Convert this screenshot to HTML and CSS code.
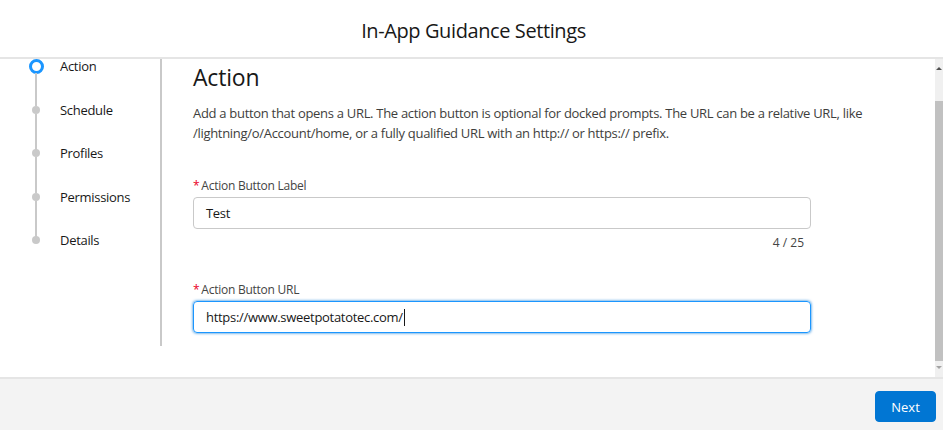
FILE: index.html
```html
<!DOCTYPE html>
<html lang="en">
<head>
<meta charset="utf-8">
<title>In-App Guidance Settings</title>
<link rel="stylesheet" href="styles.css">
</head>
<body>
<div class="modal">
  <header class="modal-header">
    <h1 class="modal-title">In-App Guidance Settings</h1>
  </header>
  <div class="modal-body">
    <nav class="path">
      <ul class="path-list">
        <li class="path-item is-current"><span class="path-marker"></span><span class="path-label">Action</span></li>
        <li class="path-item"><span class="path-marker"></span><span class="path-label">Schedule</span></li>
        <li class="path-item"><span class="path-marker"></span><span class="path-label">Profiles</span></li>
        <li class="path-item"><span class="path-marker"></span><span class="path-label">Permissions</span></li>
        <li class="path-item is-last"><span class="path-marker"></span><span class="path-label">Details</span></li>
      </ul>
    </nav>
    <main class="content">
      <h2 class="content-title">Action</h2>
      <p class="content-desc">Add a button that opens a URL. The action button is optional for docked prompts. The URL can be a relative URL, like /lightning/o/Account/home, or a fully qualified URL with an http:// or https:// prefix.</p>
      <div class="field">
        <label class="field-label"><abbr class="required">*</abbr>Action Button Label</label>
        <div class="input">Test</div>
        <div class="field-counter">4 / 25</div>
      </div>
      <div class="field field-second">
        <label class="field-label"><abbr class="required">*</abbr>Action Button URL</label>
        <div class="input is-focused">https://www.sweetpotatotec.com/<span class="caret"></span></div>
      </div>
    </main>
    <div class="scrollbar">
      <span class="scroll-arrow scroll-up"></span>
      <div class="scroll-track"><div class="scroll-thumb"></div></div>
      <span class="scroll-arrow scroll-down"></span>
    </div>
  </div>
  <footer class="modal-footer">
    <button class="btn-next" type="button">Next</button>
  </footer>
</div>
</body>
</html>
```
FILE: styles.css
```css
* { box-sizing: border-box; }
html, body {
  margin: 0;
  padding: 0;
  background: #fff;
}
body {
  font-family: "Open Sans", "Noto Sans", "Liberation Sans", sans-serif;
  color: #181818;
  width: 943px;
  height: 430px;
  overflow: hidden;
}
.modal {
  display: flex;
  flex-direction: column;
  height: 430px;
}
.modal-header {
  height: 59px;
  border-bottom: 2px solid #e5e5e5;
  display: flex;
  align-items: center;
  justify-content: center;
  padding-top: 3px;
  padding-left: 4px;
}
.modal-title {
  margin: 0;
  font-size: 20px;
  font-weight: 400;
  color: #181818;
  letter-spacing: -0.4px;
}
.modal-body {
  height: 320px;
  display: flex;
  border-bottom: 2px solid #e5e5e5;
}
.path {
  width: 162px;
  height: 287px;
  border-right: 2px solid #c9c9c9;
  flex: none;
}
.path-list {
  list-style: none;
  margin: 0;
  padding: 0;
  display: flex;
  flex-direction: column;
  gap: 29.5px;
}
.path-item {
  position: relative;
  height: 14px;
  display: flex;
  align-items: center;
  font-size: 13px;
  letter-spacing: -0.3px;
}
.path-marker {
  width: 8px;
  height: 8px;
  border-radius: 50%;
  background: #c9c9c9;
  margin-left: 32px;
  flex: none;
}
.path-item.is-current .path-marker {
  width: 15px;
  height: 15px;
  margin-left: 28.5px;
  margin-right: -3.5px;
  background: #fff;
  border: 3.5px solid #1b96ff;
}
.path-item::after {
  content: "";
  position: absolute;
  left: 35px;
  top: 11px;
  width: 2px;
  height: 36px;
  background: #c9c9c9;
}
.path-item.is-current::after { top: 14px; height: 33px; }
.path-item.is-last::after { display: none; }
.path-label {
  margin-left: 20px;
  color: #181818;
}
.content {
  flex: 1;
  padding: 3px 32px 0 31px;
}
.content-title {
  margin: 0;
  font-size: 23px;
  font-weight: 400;
  line-height: 30px;
  color: #181818;
  letter-spacing: -0.2px;
}
.content-desc {
  margin: 11px 0 0;
  font-size: 13px;
  line-height: 20px;
  color: #3e3e3c;
  letter-spacing: -0.3px;
}
.field {
  width: 618px;
  margin-top: 35px;
}
.field-second { margin-top: 31px; }
.field-label {
  display: block;
  font-size: 12px;
  line-height: 16px;
  color: #444;
  margin-bottom: 3px;
  letter-spacing: -0.25px;
}
.required {
  color: #ea001e;
  text-decoration: none;
  margin-right: 2px;
}
.input {
  height: 32px;
  border: 1px solid #c9c9c9;
  border-radius: 4px;
  padding: 0 12px;
  display: flex;
  align-items: center;
  font-size: 13px;
  color: #181818;
  letter-spacing: -0.3px;
}
.input.is-focused {
  border-color: #1b96ff;
  box-shadow: 0 0 3px #0176d3;
}
.caret {
  display: inline-block;
  width: 1px;
  height: 17px;
  background: #181818;
  margin-left: 1px;
}
.field-counter {
  text-align: right;
  font-size: 12px;
  line-height: 16px;
  color: #444;
  padding-right: 7px;
  margin-top: 6px;
}
.scrollbar {
  width: 8px;
  flex: none;
  background: #f0f0f0;
  display: flex;
  flex-direction: column;
  align-items: center;
  padding: 8px 0 8px;
}
.scroll-arrow {
  width: 0;
  height: 0;
  border-left: 3px solid transparent;
  border-right: 3px solid transparent;
}
.scroll-up { border-bottom: 3px solid #505050; }
.scroll-down { border-top: 3px solid #a3a3a3; }
.scroll-track {
  flex: 1;
  width: 100%;
  padding: 31px 0 4px;
}
.scroll-thumb {
  height: 260px;
  background: #c1c1c1;
}
.modal-footer {
  flex: 1;
  background: #f3f3f3;
  display: flex;
  justify-content: flex-end;
  align-items: flex-start;
  padding: 12px 7px 0 0;
}
.btn-next {
  width: 61px;
  height: 31px;
  border: 1px solid #0176d3;
  border-radius: 4px;
  background: #0176d3;
  color: #fff;
  font-family: inherit;
  font-size: 13px;
  padding: 0;
}
```
